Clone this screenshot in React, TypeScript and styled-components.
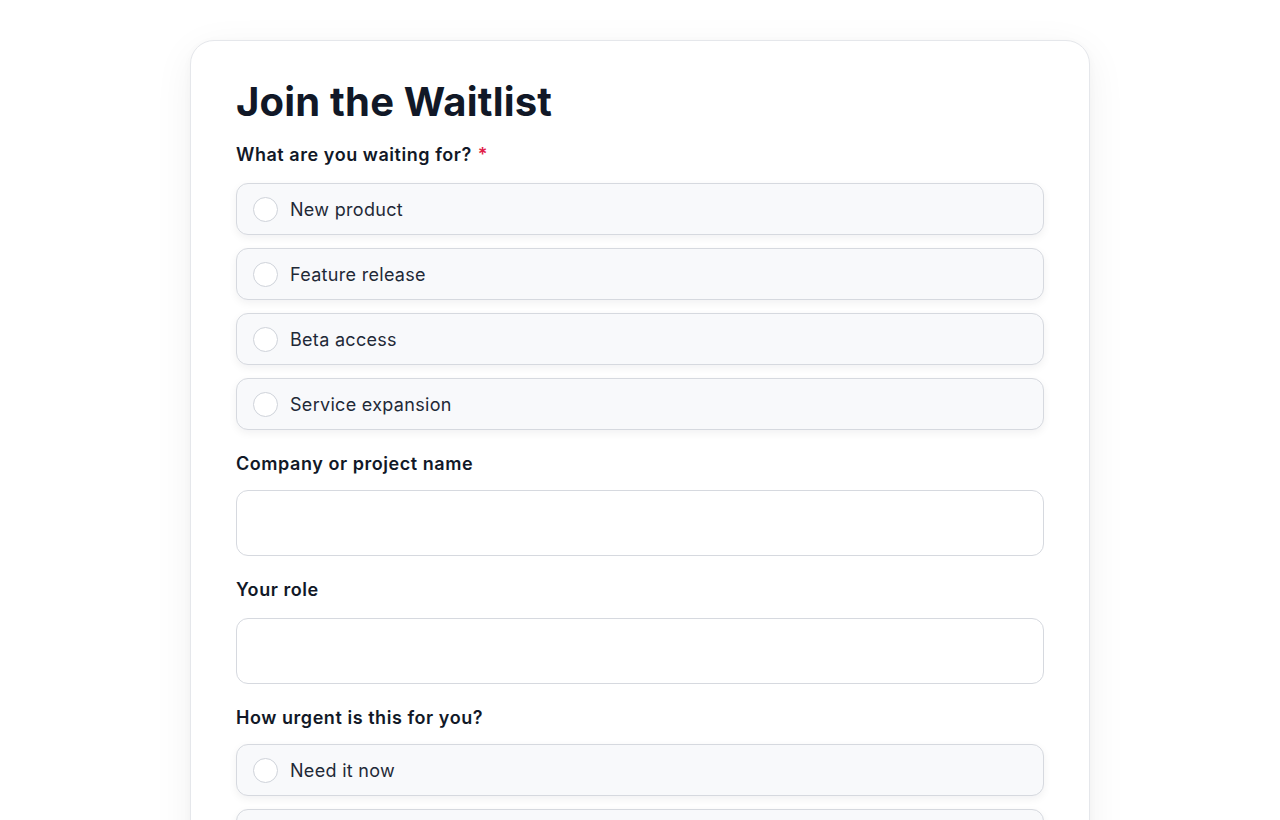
import React from 'react'
import styled, { createGlobalStyle } from 'styled-components'

const GlobalStyle = createGlobalStyle`
  html, body {
    margin: 0;
    padding: 0;
    background: #ffffff;
  }
  body {
    font-family: Inter, "Noto Sans", "Liberation Sans", sans-serif;
    -webkit-font-smoothing: antialiased;
  }
  * {
    box-sizing: border-box;
  }
`;

const Page = styled.div`
  display: flex;
  justify-content: center;
  padding-top: 40px;
  min-height: 820px;
`;

const Card = styled.form`
  width: 900px;
  background: #ffffff;
  border: 1px solid #e5e7eb;
  border-radius: 24px;
  box-shadow: 0 10px 40px rgba(15, 23, 42, 0.06), 0 2px 8px rgba(15, 23, 42, 0.03);
  padding: 37px 45px 40px;
  display: flex;
  flex-direction: column;
  gap: 22px;
`;

const Title = styled.h1`
  margin: 0 0 -5px;
  font-size: 40px;
  line-height: 48px;
  font-weight: 700;
  letter-spacing: 0.2px;
  color: #111827;
`;

const Field = styled.div`
  display: flex;
  flex-direction: column;
`;

const Label = styled.label<{ $tight?: boolean }>`
  font-size: 18px;
  line-height: 24px;
  font-weight: 600;
  color: #111827;
  margin-bottom: ${props => props.$tight ? '14px' : '16px'};
  letter-spacing: 0.55px;
`;

const Required = styled.span`
  color: #e11d48;
  margin-left: 6px;
`;

const Options = styled.div`
  display: flex;
  flex-direction: column;
  gap: 13px;
`;

const Option = styled.label`
  display: flex;
  align-items: center;
  gap: 12px;
  height: 52px;
  padding: 0 16px;
  background: #f8f9fb;
  border: 1px solid #d6d9df;
  border-radius: 12px;
  box-shadow: 0 3px 8px rgba(15, 23, 42, 0.06);
  cursor: pointer;
`;

const Radio = styled.span`
  width: 25px;
  height: 25px;
  border-radius: 50%;
  border: 1px solid #cfd3da;
  background: #ffffff;
  flex-shrink: 0;
`;

const OptionText = styled.span`
  font-size: 18px;
  color: #1f2937;
  letter-spacing: 0.3px;
`;

const TextInput = styled.input`
  height: 66px;
  width: 100%;
  border: 1px solid #d6d9df;
  border-radius: 12px;
  background: #ffffff;
  padding: 0 16px;
  font-size: 18px;
  font-family: inherit;
  outline: none;
`;

const waitingFor = ['New product', 'Feature release', 'Beta access', 'Service expansion']
const urgency = ['Need it now', 'Within a month', 'Just exploring']

const RadioGroup = ({ items }: { items: string[] }) => (
  <Options>
    {items.map(item => (
      <Option key={item}>
        <Radio />
        <OptionText>{item}</OptionText>
      </Option>
    ))}
  </Options>
)

const App = () => {
  return (
    <>
      <GlobalStyle />
      <Page>
        <Card onSubmit={e => e.preventDefault()}>
          <Title>Join the Waitlist</Title>
          <Field>
            <Label>What are you waiting for?<Required>*</Required></Label>
            <RadioGroup items={waitingFor} />
          </Field>
          <Field>
            <Label $tight>Company or project name</Label>
            <TextInput type='text' />
          </Field>
          <Field>
            <Label>Your role</Label>
            <TextInput type='text' />
          </Field>
          <Field>
            <Label $tight>How urgent is this for you?</Label>
            <RadioGroup items={urgency} />
          </Field>
        </Card>
      </Page>
    </>
  )
}

export default App
